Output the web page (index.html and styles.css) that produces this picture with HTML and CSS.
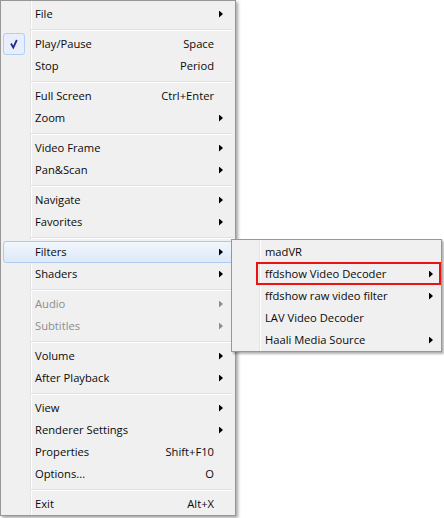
FILE: index.html
```html
<!DOCTYPE html>
<html>
    <head>
        <title>Player menu</title>
        <link rel="stylesheet" href="styles.css">
    </head>

    <body>
        <div class="menu main-menu">
            <ul class="items">
                <li class="item sub"><span class="icon"></span><span class="label">File</span></li>
                <li class="sep"></li>
                <li class="item checked">
                    <span class="icon">
                        <svg width="20" height="20" viewBox="0 0 20 20"><path d="M7 9.5 L9.3 13.6 L12.8 6" fill="none" stroke="#1f2b86" stroke-width="1.8"/></svg>
                    </span>
                    <span class="label">Play/Pause</span><span class="key">Space</span>
                </li>
                <li class="item"><span class="icon"></span><span class="label">Stop</span><span class="key">Period</span></li>
                <li class="sep"></li>
                <li class="item"><span class="icon"></span><span class="label">Full Screen</span><span class="key">Ctrl+Enter</span></li>
                <li class="item sub"><span class="icon"></span><span class="label">Zoom</span></li>
                <li class="sep"></li>
                <li class="item sub"><span class="icon"></span><span class="label">Video Frame</span></li>
                <li class="item sub"><span class="icon"></span><span class="label">Pan&amp;Scan</span></li>
                <li class="sep"></li>
                <li class="item sub"><span class="icon"></span><span class="label">Navigate</span></li>
                <li class="item sub"><span class="icon"></span><span class="label">Favorites</span></li>
                <li class="sep"></li>
                <li class="item sub active"><span class="icon"></span><span class="label">Filters</span></li>
                <li class="item sub"><span class="icon"></span><span class="label">Shaders</span></li>
                <li class="sep"></li>
                <li class="item sub disabled"><span class="icon"></span><span class="label">Audio</span></li>
                <li class="item sub disabled"><span class="icon"></span><span class="label">Subtitles</span></li>
                <li class="sep"></li>
                <li class="item sub"><span class="icon"></span><span class="label">Volume</span></li>
                <li class="item sub"><span class="icon"></span><span class="label">After Playback</span></li>
                <li class="sep"></li>
                <li class="item sub"><span class="icon"></span><span class="label">View</span></li>
                <li class="item sub"><span class="icon"></span><span class="label">Renderer Settings</span></li>
                <li class="item"><span class="icon"></span><span class="label">Properties</span><span class="key">Shift+F10</span></li>
                <li class="item"><span class="icon"></span><span class="label">Options...</span><span class="key">O</span></li>
                <li class="sep"></li>
                <li class="item"><span class="icon"></span><span class="label">Exit</span><span class="key">Alt+X</span></li>
            </ul>
        </div>

        <!-- Filters submenu, opened over the main menu -->
        <div class="menu sub-menu">
            <ul class="items">
                <li class="item"><span class="icon"></span><span class="label">madVR</span></li>
                <li class="item sub"><span class="icon"></span><span class="label">ffdshow Video Decoder</span></li>
                <li class="item sub"><span class="icon"></span><span class="label">ffdshow raw video filter</span></li>
                <li class="item"><span class="icon"></span><span class="label">LAV Video Decoder</span></li>
                <li class="item sub"><span class="icon"></span><span class="label">Haali Media Source</span></li>
            </ul>
        </div>

        <div class="mark"></div>
    </body>
</html>
```

FILE: styles.css
```css
* {
    box-sizing: border-box;
}

body {
    margin: 0;
    width: 444px;
    height: 518px;
    background: #fff;
    font-family: "Open Sans", "Noto Sans", sans-serif;
    font-size: 11.2px;
    color: #0a0a0a;
    position: relative;
}

.menu {
    --gutter: 29px; /* where the icon column line sits */
    --label-gap: 10px;
    border: 1px solid #979797;
    background: linear-gradient(to right,
        #f0f0f0 var(--gutter),
        #e2e3e3 var(--gutter), #e2e3e3 calc(var(--gutter) + 1px),
        #fff calc(var(--gutter) + 1px), #fff calc(var(--gutter) + 2px),
        #f0f0f0 calc(var(--gutter) + 2px));
}

.main-menu {
    width: 236px;
    padding: 2px 2px 0;
    box-shadow: 2px 2px 3px rgba(0, 0, 0, 0.35);
}

.sub-menu {
    --gutter: 27px;
    --label-gap: 9px;
    position: absolute;
    left: 231px;
    top: 239px;
    width: 211px;
    padding: 1px 2px 0;
    box-shadow: 2px 2px 2px rgba(0, 0, 0, 0.3);
}

.items {
    list-style: none;
    margin: 0;
    padding: 0;
}

.item {
    display: flex;
    align-items: center;
    height: 22px;
    padding-right: 9px;
    border: 1px solid transparent;
    border-radius: 3px;
    white-space: nowrap;
}

.sub-menu .item {
    padding-right: 5px;
}

.icon {
    flex: none;
    width: 22px;
    height: 22px;
    margin: -1px 0 0 -1px;
    border: 1px solid transparent;
    border-radius: 3px;
}

.checked .icon {
    border-color: #aecff7;
    background: #e8eefa;
}

.icon svg {
    display: block;
}

.label {
    flex: 1;
    margin-left: var(--label-gap);
    padding-bottom: 1px;
}

.key {
    padding-bottom: 1px;
}

/* submenu arrow column */
.item::after {
    content: "";
    flex: none;
    width: 4px;
    height: 7px;
    margin-left: 5px;
}

.sub::after {
    background: #000;
    clip-path: polygon(0 0, 100% 50%, 0 100%);
}

.disabled {
    color: #8d8d8d;
}

.disabled::after {
    background: #8d8d8d;
}

.active {
    border-color: #aecbee;
    background: linear-gradient(#f1f6fd, #dde9f8);
}

.sep {
    height: 8px;
    margin-left: 28px;
    padding-top: 4px;
}

.sep::before {
    content: "";
    display: block;
    height: 1px;
    background: #e0e0e0;
    border-bottom: 1px solid #fff;
    box-sizing: content-box;
}

/* red box drawn around the chosen decoder */
.mark {
    position: absolute;
    left: 256px;
    top: 262px;
    width: 185px;
    height: 23px;
    border: 2px solid #ee1111;
}
```
